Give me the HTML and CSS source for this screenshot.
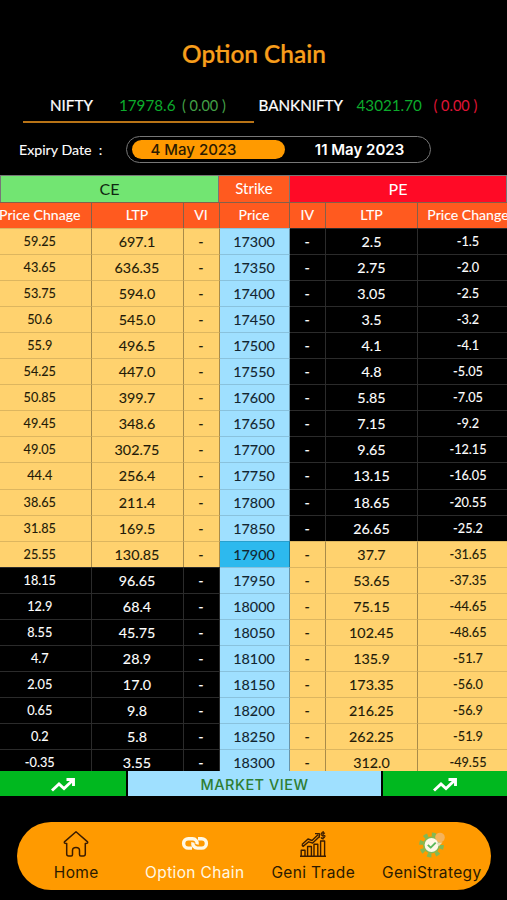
FILE: index.html
```html
<!DOCTYPE html>
<html lang="en">
  <head>
    <meta charset="utf-8" />
    <title>Option Chain</title>
    <meta name="viewport" content="width=device-width, initial-scale=1" />
    <link rel="stylesheet" href="styles.css">
  </head>
  <body>
    <h1 class="title">Option Chain</h1>

    <div class="indices">
      <div class="index active">
        <span class="index-name">NIFTY</span>
        <span class="index-price">17978.6</span>
        <span class="index-change up">( 0.00 )</span>
      </div>
      <div class="index bank">
        <span class="index-name">BANKNIFTY</span>
        <span class="index-price">43021.70</span>
        <span class="index-change down">( 0.00 )</span>
      </div>
    </div>

    <div class="expiry">
      <span class="expiry-label">Expiry Date&nbsp; :</span>
      <div class="expiry-switch">
        <button class="date selected">4 May 2023</button>
        <button class="date">11 May 2023</button>
      </div>
    </div>

    <div class="chain">
      <div class="group-head">
        <div class="ce">CE</div>
        <div class="strike-head">Strike</div>
        <div class="pe">PE</div>
      </div>
      <div class="row col-head">
        <div>Price Chnage</div>
        <div>LTP</div>
        <div>VI</div>
        <div>Price</div>
        <div>IV</div>
        <div>LTP</div>
        <div>Price Change</div>
      </div>
      <div id="rows"></div>
    </div>

    <div class="market">
      <button class="trend">
        <svg width="26" height="16" viewBox="0 0 26 16"><path d="M2 13.500 9 7l5 4.500L23 3M16.500 2.500H23.500V9" /></svg>
      </button>
      <div class="market-view">MARKET VIEW</div>
      <button class="trend">
        <svg width="26" height="16" viewBox="0 0 26 16"><path d="M2 13.500 9 7l5 4.500L23 3M16.500 2.500H23.500V9" /></svg>
      </button>
    </div>

    <nav class="tabs">
      <a class="tab">
        <svg class="icon line" width="28" height="28" viewBox="0 0 28 28">
          <path d="M14 1.700 2.400 11.900Q1.800 13.600 4.700 13.400V24Q4.700 26 6.700 26H9.200Q10.500 26 10.500 24.500V20.500Q10.500 17.500 14 17.500T17.500 20.500V24.500Q17.500 26 18.800 26H21.300Q23.300 26 23.300 24V13.400Q26.200 13.600 25.600 11.900Z" />
        </svg>
        <span>Home</span>
      </a>
      <a class="tab current">
        <svg class="icon link" width="28" height="28" viewBox="0 0 28 28">
          <path d="M11 18.100H7.300A4.700 4.700 0 0 1 7.300 8.700H11.500A4.700 4.700 0 0 1 16.100 14.400" />
          <path d="M17 8.700H20.700A4.700 4.700 0 0 1 20.700 18.100H16.500A4.700 4.700 0 0 1 11.900 12.400" />
        </svg>
        <span>Option Chain</span>
      </a>
      <a class="tab">
        <svg class="icon bars" width="28" height="28" viewBox="0 0 28 28">
          <path d="M1 26.300H27M2.200 26V20.200H6V26M8.600 26V16.500H12.400V26M15 26V14.200H18.800V26M21.600 26V11H25.600V26" />
          <path d="M3 14.500 9 9l4 1.500L19 4.800M3.800 16.600 9.700 11.800l4 1.300L20 7M16 3.600H20.300V7.800M3 14.500l.8 2.100" />
          <path class="dollar" d="M25.900 3.600Q23.300 1.600 22.300 3.600T24.200 5.300T25.300 7.500T22 7.400M24.100 1V9.500" />
        </svg>
        <span>Geni Trade</span>
      </a>
      <a class="tab">
        <svg class="icon" width="28" height="28" viewBox="0 0 28 28">
          <circle cx="13.500" cy="15" r="10.400" fill="none" stroke="#82b954" stroke-width="4" stroke-dasharray="4.084 4.084" />
          <circle cx="13.500" cy="15" r="8.500" fill="#82b954" />
          <circle cx="22" cy="7.500" r="4.800" fill="#f5b35a" />
          <circle cx="13.500" cy="15" r="6.900" fill="#fff8e8" />
          <path d="M18.500 12.500h6l-4 4z" fill="#e9dcb8" />
          <path d="m9.800 14.800 2.900 2.900 5-5" fill="none" stroke="#5bb85b" stroke-width="1.900" />
        </svg>
        <span>GeniStrategy</span>
      </a>
    </nav>

    <script src="script.js"></script>
  </body>
</html>
```

FILE: styles.css
```css
* {
  box-sizing: border-box;
}
body {
  margin: 0;
  height: 900px;
  overflow: hidden;
  display: flex;
  flex-direction: column;
  background: #000;
  color: #fff;
  font-family: Lato, sans-serif;
}
button {
  border: 0;
  padding: 0;
  background: none;
  color: inherit;
  font: inherit;
}
.title {
  margin: 38px 0 0 1px;
  height: 32px;
  line-height: 32px;
  text-align: center;
  font-size: 24.4px;
  font-weight: 600;
  color: #f79e1b;
  -webkit-text-stroke: 0.2px;
}

/* index prices */
.indices {
  display: flex;
  margin: 21px 23px 0;
  height: 32px;
}
.index {
  display: flex;
  align-items: baseline;
  width: 231px;
  padding: 4px 0 0 27px;
  line-height: 20px;
  font-size: 15.2px;
  white-space: nowrap;
}
.index.active {
  border-bottom: 2px solid #b87316;
}
.index.bank {
  padding-left: 5px;
}
.index-name {
  width: 69px;
  -webkit-text-stroke: 0.2px;
}
.bank .index-name {
  width: 98px;
}
.index-price {
  width: 63px;
  color: #0cab2c;
}
.bank .index-price {
  width: 77px;
}
.index-change {
  font-size: 14.5px;
}
.up {
  color: #43a047;
}
.down {
  color: #e01436;
}

/* expiry dates */
.expiry {
  display: flex;
  align-items: center;
  margin: 13px 0 0 19px;
  height: 27px;
}
.expiry-label {
  width: 107px;
  font-size: 14.2px;
  -webkit-text-stroke: 0.1px;
}
.expiry-switch {
  display: flex;
  align-items: center;
  width: 305px;
  height: 27px;
  padding: 0 5px;
  border: 1px solid #777;
  border-radius: 14px;
  font-family: Inter, sans-serif;
  font-size: 15px;
  font-weight: 600;
  letter-spacing: 0.45px;
}
.date {
  flex: 1;
  height: 19px;
  line-height: 20px;
  padding-left: 9px;
  border-radius: 10px;
}
.date.selected {
  flex: 0 0 153px;
  padding: 0 30px 0 0;
  background: #ff9a00;
  color: #2b1a00;
  font-weight: 500;
}

/* option chain table */
.chain {
  margin-top: 12px;
  height: 596px;
  overflow: hidden;
}
.group-head {
  display: grid;
  grid-template-columns: 218px 71px 217px;
  height: 26.5px;
  line-height: 25px;
  padding-left: 1px;
  background: #777;
  text-align: center;
  font-size: 16px;
}
.group-head div {
  border-top: 1px solid #777;
  border-right: 1px solid #777;
}
.ce {
  background: #72e572;
  color: #102810;
}
.strike-head {
  background: #ff5a1f;
  font-size: 15px;
}
.pe {
  background: #ff0a26;
}
.row {
  display: grid;
  grid-template-columns: 102.500px 92px 36px 70px 36.500px 92px 101px;
  width: 530px;
  margin-left: -11px;
  height: 26.075px;
  line-height: 25.500px;
  text-align: center;
  font-size: 14.3px;
  -webkit-text-stroke: 0.1px;
}
.row div {
  border-right: 1px solid #0005;
  border-top: 1px solid #0002;
}
.row.col-head {
  height: 26.4px;
  line-height: 24px;
  font-size: 14.1px;
}
.col-head div {
  background: #ff5a1f;
  border-color: #84604a;
  white-space: nowrap;
}
.row .small {
  font-size: 12.7px;
}
.row .itm {
  background: #ffd26e;
  color: #221a08;
}
.row .otm {
  background: #000;
  border-color: #2b2b2b;
}
.row .strike {
  background: #9fe0ff;
  color: #122530;
}
.row .atm {
  background: #2db9ee;
}

/* market strip */
.market {
  display: grid;
  grid-template: 25px / 126px 253px 1fr;
  gap: 2px;
  height: 25px;
}
.trend {
  display: flex;
  align-items: center;
  justify-content: center;
  padding-top: 2px;
  background: #00b81f;
}
.trend svg {
  fill: none;
  stroke: #fff;
  stroke-width: 2.900;
}
.market-view {
  padding-top: 2px;
  background: #9fe0ff;
  color: #2e7d32;
  line-height: 23px;
  text-align: center;
  font-family: Inter, sans-serif;
  font-size: 14.5px;
  font-weight: 500;
  letter-spacing: 0.5px;
}

/* bottom tabs */
.tabs {
  display: grid;
  grid-template-columns: repeat(4, 118.500px);
  margin: 26px 16px 0 17px;
  height: 68px;
  border-radius: 34px;
  background: #ff9a00;
  color: #2b1a00;
  font-family: Inter, sans-serif;
  font-size: 15.5px;
  letter-spacing: 0.35px;
}
.tab {
  display: flex;
  flex-direction: column;
  align-items: center;
  padding-top: 8px;
  line-height: 20px;
  white-space: nowrap;
}
.tab span {
  margin-top: 5px;
}
.tab.current {
  color: #fff8e4;
}
.icon {
  fill: none;
  stroke-linejoin: round;
}
.line {
  stroke: #3a1c00;
  stroke-width: 1.500;
}
.link {
  stroke: #fff8e4;
  stroke-width: 3.400;
}
.bars {
  stroke: #3a1c00;
  stroke-width: 1.400;
}
.dollar {
  stroke-width: 1.200;
}
```

FILE: script.js
```js
// CE change, CE ltp, strike, PE ltp, PE change
const chain = [
  ["59.25", "697.1", 17300, "2.5", "-1.5"],
  ["43.65", "636.35", 17350, "2.75", "-2.0"],
  ["53.75", "594.0", 17400, "3.05", "-2.5"],
  ["50.6", "545.0", 17450, "3.5", "-3.2"],
  ["55.9", "496.5", 17500, "4.1", "-4.1"],
  ["54.25", "447.0", 17550, "4.8", "-5.05"],
  ["50.85", "399.7", 17600, "5.85", "-7.05"],
  ["49.45", "348.6", 17650, "7.15", "-9.2"],
  ["49.05", "302.75", 17700, "9.65", "-12.15"],
  ["44.4", "256.4", 17750, "13.15", "-16.05"],
  ["38.65", "211.4", 17800, "18.65", "-20.55"],
  ["31.85", "169.5", 17850, "26.65", "-25.2"],
  ["25.55", "130.85", 17900, "37.7", "-31.65"],
  ["18.15", "96.65", 17950, "53.65", "-37.35"],
  ["12.9", "68.4", 18000, "75.15", "-44.65"],
  ["8.55", "45.75", 18050, "102.45", "-48.65"],
  ["4.7", "28.9", 18100, "135.9", "-51.7"],
  ["2.05", "17.0", 18150, "173.35", "-56.0"],
  ["0.65", "9.8", 18200, "216.25", "-56.9"],
  ["0.2", "5.8", 18250, "262.25", "-51.9"],
  ["-0.35", "3.55", 18300, "312.0", "-49.55"],
];
const atm = 17900;

document.getElementById("rows").innerHTML = chain
  .map(([ceChange, ceLtp, strike, peLtp, peChange]) => {
    const ce = strike <= atm ? "itm" : "otm";
    const pe = strike >= atm ? "itm" : "otm";
    return `
      <div class="row">
        <div class="small ${ce}">${ceChange}</div>
        <div class="${ce}">${ceLtp}</div>
        <div class="${ce}">-</div>
        <div class="strike ${strike === atm ? "atm" : ""}">${strike}</div>
        <div class="${pe}">-</div>
        <div class="${pe}">${peLtp}</div>
        <div class="small ${pe}">${peChange}</div>
      </div>
    `;
  })
  .join("");
```
